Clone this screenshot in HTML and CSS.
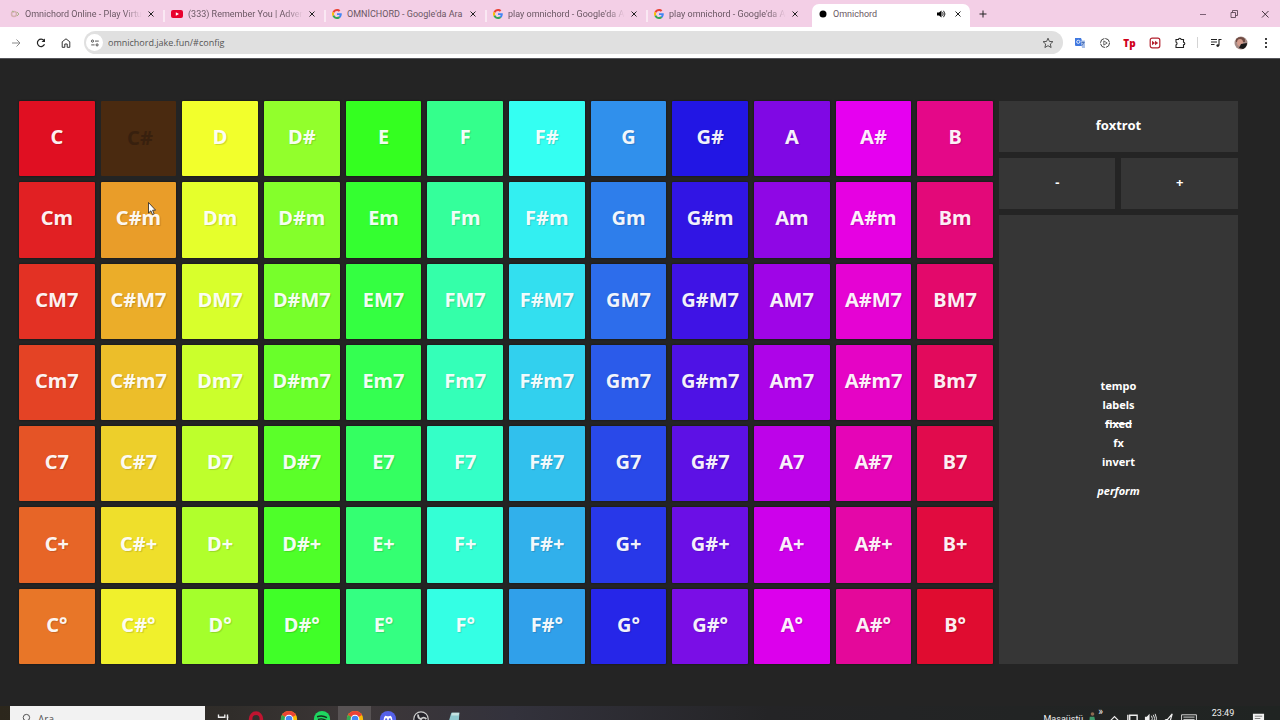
FILE: index.html
```html
<!DOCTYPE html>
<html lang="tr">
<head>
    <meta charset="UTF-8">
    <meta name="viewport" content="width=device-width, initial-scale=1.0">
    <title>Omnichord</title>
    <link rel="stylesheet" href="styles.css">
</head>
<body>
    <!-- shared icons -->
    <svg class="sprite" aria-hidden="true">
        <symbol id="google" viewBox="0 0 48 48">
            <path fill="#ea4335" d="M24 9.500c3.500 0 6.700 1.200 9.200 3.600l6.900-6.900C35.900 2.400 30.500 0 24 0 14.600 0 6.500 5.400 2.600 13.200l8 6.200C12.400 13.700 17.700 9.500 24 9.500z"/>
            <path fill="#4285f4" d="M47 24.500c0-1.600-.2-3.100-.4-4.500H24v9h12.900c-.6 3-2.200 5.500-4.700 7.200l7.700 6C44.400 38 47 32 47 24.500z"/>
            <path fill="#fbbc05" d="M10.500 28.600c-.5-1.500-.8-3-.8-4.600s.3-3.100.8-4.600l-8-6.200C1 16.500 0 20.100 0 24s1 7.500 2.600 10.800z"/>
            <path fill="#34a853" d="M24 48c6.500 0 11.900-2.100 15.900-5.800l-7.700-6c-2.200 1.500-4.900 2.300-8.200 2.300-6.300 0-11.600-4.200-13.500-9.900l-8 6.200C6.500 42.600 14.600 48 24 48z"/>
        </symbol>
        <symbol id="close" viewBox="0 0 8 8">
            <path d="M1.500 1.500l5 5M6.500 1.500l-5 5" stroke="currentColor" fill="none"/>
        </symbol>
        <symbol id="chrome" viewBox="0 0 20 20">
            <circle cx="10" cy="10" r="9" fill="#fbbc05"/>
            <path d="M10 10L2.200 5.500A9 9 0 0 1 17.800 5.500z" fill="#ea4335"/>
            <path d="M2.200 5.500A9 9 0 0 0 10 19l3-6-3-3z" fill="#34a853"/>
            <circle cx="10" cy="10" r="4.800" fill="#fff"/>
            <circle cx="10" cy="10" r="3.700" fill="#4285f4"/>
        </symbol>
    </svg>

    <header class="browser">
        <nav class="tabs">
            <div class="tab">
                <svg class="favicon" viewBox="0 0 10 10"><circle cx="4" cy="5" r="2.500" fill="none" stroke="#d3b0b0" stroke-width="1.500"/><path d="M2 2l2 1M7 3l2 2-2 2" stroke="#a9b48a" fill="none"/></svg>
                <a href="#" class="tab-title fade">Omnichord Online - Play Virtu</a>
                <button class="tab-close" aria-label="Kapat"><svg><use href="#close"/></svg></button>
            </div>
            <div class="tab">
                <svg class="favicon wide" viewBox="0 0 12 10"><rect x="0" y="1" width="12" height="8" rx="2" fill="#e8002d"/><path d="M4.800 3.200v3.600L8 5z" fill="#fff"/></svg>
                <a href="#" class="tab-title fade">(333) Remember You | Advent</a>
                <button class="tab-close" aria-label="Kapat"><svg><use href="#close"/></svg></button>
            </div>
            <div class="tab">
                <svg class="favicon"><use href="#google"/></svg>
                <a href="#" class="tab-title">OMNİCHORD - Google'da Ara</a>
                <button class="tab-close" aria-label="Kapat"><svg><use href="#close"/></svg></button>
            </div>
            <div class="tab">
                <svg class="favicon"><use href="#google"/></svg>
                <a href="#" class="tab-title fade">play omnichord - Google'da Ar</a>
                <button class="tab-close" aria-label="Kapat"><svg><use href="#close"/></svg></button>
            </div>
            <div class="tab">
                <svg class="favicon"><use href="#google"/></svg>
                <a href="#" class="tab-title fade">play omnichord - Google'da Ar</a>
                <button class="tab-close" aria-label="Kapat"><svg><use href="#close"/></svg></button>
            </div>
            <div class="tab active">
                <svg class="favicon" viewBox="0 0 10 10"><circle cx="5" cy="5" r="3.500"/></svg>
                <a href="#" class="tab-title">Omnichord</a>
                <svg class="sound" viewBox="0 0 10 10"><path d="M1 3.500h2l2.500-2v7L3 6.500H1z"/><path d="M6.500 3.300q1.400 1.700 0 3.400M7.500 1.800q3 3.200 0 6.400" fill="none" stroke="#222"/></svg>
                <button class="tab-close" aria-label="Kapat"><svg><use href="#close"/></svg></button>
            </div>
            <button class="tab-new" aria-label="Yeni sekme"><svg viewBox="0 0 10 10"><path d="M5 1.500v7M1.500 5h7" stroke="#222" fill="none"/></svg></button>
            <div class="window-buttons">
                <button aria-label="Simge durumuna küçült"><svg viewBox="0 0 10 10"><path d="M2 5.500h6" stroke="#7b6074" fill="none"/></svg></button>
                <button aria-label="Önceki boyut"><svg viewBox="0 0 10 10"><path d="M2 3.500h4.500v5H2zM3.500 3.500v-2h5v5h-2" stroke="#4c3a47" fill="none" stroke-width=".8"/></svg></button>
                <button aria-label="Kapat"><svg viewBox="0 0 10 10"><path d="M2 2l6.500 6.500M8.500 2L2 8.500" stroke="#33262f" fill="none" stroke-width=".9"/></svg></button>
            </div>
        </nav>

        <div class="toolbar">
            <button class="tool" aria-label="İleri"><svg viewBox="0 0 12 12"><path d="M2 6h8M6.500 2.500L10 6 6.500 9.500" stroke="#8a8a8a" fill="none"/></svg></button>
            <button class="tool" aria-label="Yenile"><svg viewBox="0 0 12 12"><path d="M9.500 7.300A3.700 3.700 0 1 1 9 3.500" stroke="#222" stroke-width="1.200" fill="none"/><path d="M10 1.500v3.500H6.500z" fill="#222"/></svg></button>
            <button class="tool" aria-label="Ana sayfa"><svg viewBox="0 0 12 12"><path d="M2.200 10.300V4.800L6 1.800l3.800 3v5.500H7.200V7H4.800v3.300z" stroke="#333" fill="none"/></svg></button>
            <label class="address">
                <span class="site-info"><svg viewBox="0 0 12 12"><path d="M6 3.700h4.500M1.500 8.300h4" stroke="#333" fill="none"/><circle cx="3" cy="3.700" r="1.300" stroke="#333" fill="none"/><circle cx="8.500" cy="8.300" r="1.300" stroke="#333" fill="none"/></svg></span>
                <input type="text" value="omnichord.jake.fun/#config" aria-label="Adres">
                <svg class="star" viewBox="0 0 12 12"><path d="M6 1.200l1.400 3.200 3.500.3-2.600 2.300.8 3.500L6 8.700l-3.100 1.800.8-3.500L1.100 4.700l3.500-.3z" stroke="#444" stroke-width=".9" fill="none"/></svg>
            </label>
            <button class="tool" aria-label="Çeviri"><svg viewBox="0 0 12 12"><path d="M1 1h6l3 8H2a1 1 0 0 1-1-1z" fill="#3f78e0"/><path d="M6.500 3.500H11V11H8z" fill="#a9bfe8"/><circle cx="4.300" cy="4.800" r="1.600" fill="none" stroke="#fff" stroke-width=".8"/><path d="M7.500 5.500h3M9 4.500v1M8 8.500l2-3" stroke="#345da8" stroke-width=".7"/></svg></button>
            <button class="tool" aria-label="Oynatıcı"><svg viewBox="0 0 12 12"><circle cx="6" cy="6" r="4.500" fill="none" stroke="#444" stroke-dasharray="6 1"/><path d="M4.800 3.900v4.200L8.200 6z" fill="none" stroke="#444" stroke-width=".8"/></svg></button>
            <button class="tool tp" aria-label="Eklenti Tp">Tp</button>
            <button class="tool" aria-label="Hızlandır"><svg viewBox="0 0 12 12"><rect x="1.200" y="1.200" width="9.600" height="9.600" rx="2" fill="#fff" stroke="#b3202e" stroke-width="1.200"/><path d="M3 3.800v4.400L6 6zM6 3.800v4.400L9.200 6z" fill="#b3202e"/></svg></button>
            <button class="tool" aria-label="Uzantılar"><svg viewBox="0 0 12 12"><path d="M2 2.500h2.500a1.300 1.300 0 0 1 2.600 0h2.400v2.700a1.300 1.300 0 0 1 0 2.600v2.700H2V8a1.600 1.600 0 0 0 0-3z" fill="none" stroke="#222" stroke-width="1.100"/></svg></button>
            <span class="divider"></span>
            <button class="tool" aria-label="Medya"><svg viewBox="0 0 12 12"><path d="M1 2.500h6M1 5h6M1 7.500h3.500M9 8.500V2.500h2.500" stroke="#222" stroke-width="1.100" fill="none"/><circle cx="7.800" cy="8.600" r="1.400" fill="#222"/></svg></button>
            <button class="tool" aria-label="Profil"><svg class="avatar" viewBox="0 0 14 14"><circle cx="7" cy="7" r="6.500" fill="#a58b86"/><path d="M2 3q5-4 9 0v3H2z" fill="#6f4b43"/><ellipse cx="6" cy="6.500" rx="3" ry="3.500" fill="#d49c8c"/><path d="M7 8l6-1q0 4-4 6L5 12z" fill="#181818"/></svg></button>
            <button class="tool" aria-label="Menü"><svg viewBox="0 0 12 12"><circle cx="6" cy="2" r="1"/><circle cx="6" cy="6" r="1"/><circle cx="6" cy="10" r="1"/></svg></button>
        </div>
    </header>

    <main class="omnichord" id="omnichord">
        <section class="config">
            <button class="rhythm">foxtrot</button>
            <button>-</button>
            <button>+</button>
            <div class="options">
                <button>tempo</button>
                <button>labels</button>
                <button class="off">fixed</button>
                <button>fx</button>
                <button>invert</button>
                <button class="perform">perform</button>
            </div>
        </section>
    </main>

    <footer class="taskbar">
        <div class="taskbar-inner">
            <label class="search">
                <svg viewBox="0 0 12 12"><circle cx="7" cy="5" r="3.500" fill="none" stroke="#444"/><path d="M4.500 7.500L1 11" stroke="#444"/></svg>
                <input type="text" placeholder="Ara" aria-label="Ara">
            </label>
            <button class="app" aria-label="Görev görünümü"><svg viewBox="0 0 20 20"><path d="M5 5v3h7V5M5 15v-3h7v3M15 5v10M14 8h2" stroke="#eee" stroke-width="1.500" fill="none"/></svg></button>
            <button class="app" aria-label="Opera"><svg viewBox="0 0 20 20"><ellipse cx="10" cy="10" rx="6" ry="6.500" fill="none" stroke="#c01430" stroke-width="4"/></svg></button>
            <button class="app" aria-label="Chrome"><svg><use href="#chrome"/></svg></button>
            <button class="app" aria-label="Spotify"><svg viewBox="0 0 20 20"><circle cx="10" cy="10" r="9" fill="#1ed760"/><path d="M4.500 7.500q6-2 11 1M5.500 10.500q5-1.500 9 1" stroke="#15301d" stroke-width="1.500" fill="none"/></svg></button>
            <button class="app open" aria-label="Chrome, açık"><svg><use href="#chrome"/></svg></button>
            <button class="app" aria-label="Discord"><svg viewBox="0 0 20 20"><circle cx="10" cy="10" r="9" fill="#5561e8"/><path d="M5 13q0-5 2-6.500l2 .5h2l2-.5q2 1.500 2 6.500l-3 1H8z" fill="#fff"/><circle cx="8" cy="10.500" r="1.200" fill="#5561e8"/><circle cx="12" cy="10.500" r="1.200" fill="#5561e8"/></svg></button>
            <button class="app" aria-label="OBS"><svg viewBox="0 0 20 20"><circle cx="10" cy="10" r="8" fill="#25232a" stroke="#ccc" stroke-width="1.300"/><path d="M10 10q-4-1-3-5M10 10q3-3 6 0M10 10q0 4-4 4" stroke="#ccc" stroke-width="2" fill="none"/></svg></button>
            <button class="app" aria-label="Not Defteri"><svg viewBox="0 0 20 20"><path d="M7 3h9l-1 14H3z" fill="#8fc9cf"/><path d="M8 3h8l-1 3H7z" fill="#c6e3e2"/></svg></button>
            <div class="tray">
                <span>Masaüstü</span>
                <svg class="figure" viewBox="0 0 10 16"><circle cx="5" cy="3" r="2" fill="#8d6b52"/><path d="M2 6h5l2 9H1z" fill="#3d9a6b"/></svg>
                <span class="more">»</span>
                <svg viewBox="0 0 14 14"><path d="M3 9l4-4 4 4" stroke="#eee" fill="none" stroke-width="1.300"/></svg>
                <svg viewBox="0 0 14 14"><path d="M2 3v8M4 3.500h8v7H4z" stroke="#eee" fill="none" stroke-width="1.500"/></svg>
                <svg viewBox="0 0 14 14"><path d="M1 5h2l3-3v10L3 9H1z" fill="#eee"/><path d="M8 4q2 3 0 6M10 3q3 4 0 8M12 2q3 5 0 10" stroke="#eee" fill="none"/></svg>
                <svg viewBox="0 0 14 14"><path d="M3 12q-1-4 3-4l5-6-2 7q-2 3-6 3" stroke="#eee" fill="none" stroke-width="1.300"/></svg>
                <svg class="keyboard" viewBox="0 0 18 14"><path d="M1 3h16v9H1zM3 5.500h12M3 8h12M5 10.500h8" stroke="#ddd" fill="none"/></svg>
                <time>23:49</time>
                <svg class="notice" viewBox="0 0 14 14"><path d="M1 2h12v8H8l-3 3v-3H1z" fill="#f2f2f2"/><path d="M3 4.500h8M3 7h6" stroke="#777"/></svg>
            </div>
        </div>
    </footer>

    <svg class="cursor" viewBox="0 0 8 13"><path d="M.5.500v10.500l2.400-2.200 1.600 3.700 1.600-.7-1.500-3.600h3z" fill="#fff" stroke="#222" stroke-width=".8"/></svg>

    <script src="script.js"></script>
</body>
</html>
```
FILE: styles.css
```css
:root {
    --tab-strip: #f3cfe6;
    --page: #242424;
    --panel: #363636;
    --gap: 6px;
}

* {
    box-sizing: border-box;
}

body {
    margin: 0;
    height: 100vh;
    display: flex;
    flex-direction: column;
    overflow: hidden;
    background: var(--page);
    font-family: "Segoe UI", "Open Sans", sans-serif;
}

button,
input {
    font: inherit;
    color: inherit;
    border: 0;
    padding: 0;
    margin: 0;
    background: none;
    outline: none;
}

button svg {
    display: block;
}

.sprite {
    position: absolute;
    width: 0;
    height: 0;
}

/* tabs */
.tabs {
    display: flex;
    align-items: flex-end;
    height: 27px;
    padding-left: 4px;
    background: var(--tab-strip);
    font-family: "Segoe UI", Roboto, sans-serif;
    font-size: 9px;
}

.tab {
    flex: 0 1 161px;
    min-width: 0;
    height: 23px;
    padding: 0 10px 3px 6px;
    display: flex;
    align-items: center;
    gap: 5px;
    color: #6a5763;
    background: linear-gradient(#fae8f3, #fae8f3) right 6px / 2px 12px no-repeat;
}

.tab:nth-child(5) {
    background: none;
}

.tab.active {
    background: #fff;
    border-radius: 7px 7px 0 0;
    margin-left: 3px;
    padding-right: 8px;
    flex-basis: 158px;
}

.favicon {
    flex: none;
    width: 10px;
    height: 10px;
}

.favicon.wide {
    width: 12px;
}

.tab-title {
    flex: 1;
    min-width: 0;
    white-space: nowrap;
    color: inherit;
    text-decoration: none;
}

.tab-title.fade {
    mask-image: linear-gradient(to right, #000 calc(100% - 18px), transparent);
}

.sound {
    flex: none;
    width: 10px;
    height: 10px;
    margin-right: 3px;
}

.tab-close {
    flex: none;
    color: #222;
}

.tab-close svg {
    width: 8px;
    height: 8px;
}

.tab-new {
    align-self: center;
    margin-left: 8px;
}

.tab-new svg {
    width: 10px;
    height: 10px;
}

.window-buttons {
    display: flex;
    align-self: center;
    margin-left: auto;
}

.window-buttons button {
    width: 31px;
    display: flex;
    justify-content: center;
}

.window-buttons svg {
    width: 10px;
    height: 10px;
}

/* toolbar */
.toolbar {
    display: flex;
    align-items: center;
    height: 32px;
    padding: 0 2px 0 3px;
    background: #fff;
    border-bottom: 1px solid #55555a;
}

.tool {
    flex: none;
    width: 25px;
    display: flex;
    justify-content: center;
}

.tool svg {
    width: 12px;
    height: 12px;
}

.tool .avatar {
    width: 14px;
    height: 14px;
}

.tool.tp {
    font-size: 10px;
    line-height: 12px;
    font-weight: 800;
    color: #d0021b;
}

.address {
    flex: 1;
    display: flex;
    align-items: center;
    gap: 5px;
    height: 23px;
    margin: 0 4px 0 6px;
    padding: 0 9px 0 2px;
    border-radius: 12px;
    background: #e0e0e0;
    font-size: 9px;
    color: #555;
}

.address input {
    flex: 1;
}

.site-info {
    display: flex;
    align-items: center;
    justify-content: center;
    width: 17px;
    height: 17px;
    border-radius: 50%;
    background: #fff;
}

.site-info svg {
    width: 10px;
    height: 10px;
}

.star {
    width: 12px;
    height: 12px;
}

.divider {
    width: 1px;
    height: 11px;
    margin: 0 5px;
    background: #d4d4d4;
}

/* instrument */
.omnichord {
    flex: 1;
    min-height: 0;
    display: grid;
    grid-template-columns: repeat(15, 1fr);
    grid-template-rows: repeat(7, 1fr);
    gap: var(--gap);
    padding: 42px 42px 42px 19px;
    font-family: "Trebuchet MS", "Noto Sans", sans-serif;
    font-weight: bold;
    color: #fff;
}

.chord {
    min-width: 0;
    padding-bottom: 4px;
    border-radius: 1px;
    font-size: 20px;
    color: rgba(255, 255, 255, 0.94);
    text-shadow: 1px 1px 1px rgba(0, 0, 0, 0.15);
    box-shadow: 0 0 2px rgba(0, 0, 0, 0.6);
}

.chord.playing {
    color: #38200e;
    padding: 0 0 2px 3px;
    text-shadow: none;
    box-shadow: none;
}

.config {
    grid-column: 13 / 16;
    grid-row: 1 / 8;
    display: grid;
    grid-template-columns: 1fr 1fr;
    grid-template-rows: 51px 51px 1fr;
    gap: var(--gap);
    font-size: 13px;
    text-shadow: 1px 1px 1px rgba(0, 0, 0, 0.6);
}

.config > * {
    background: var(--panel);
    padding-bottom: 3px;
}

.rhythm,
.options {
    grid-column: 1 / 3;
}

.options {
    display: flex;
    flex-direction: column;
    align-items: center;
    justify-content: center;
    font-size: 11px;
    line-height: 19px;
}

.off {
    text-decoration: line-through;
}

.perform {
    margin-top: 10px;
    font-style: italic;
}

/* taskbar, only its upper half is on screen */
.taskbar {
    flex: 0 0 14px;
    overflow: hidden;
    background: linear-gradient(to right, #2c271c, #302d2a 18%, #3d3738 28%, #33323c 40%, #242426 60%, #202422);
}

.taskbar-inner {
    display: flex;
    align-items: stretch;
    height: 25px;
    padding-left: 10px;
}

.search {
    display: flex;
    align-items: center;
    gap: 7px;
    width: 195px;
    margin-right: 1px;
    padding-left: 10px;
    background: #f2f2f2;
    color: #555;
    font-size: 10px;
}

.search svg {
    width: 11px;
    height: 11px;
}

.search input {
    flex: 1;
    min-width: 0;
}

.search input::placeholder {
    color: #555;
}

.app {
    width: 33px;
    display: flex;
    align-items: center;
    justify-content: center;
}

.app svg {
    width: 18px;
    height: 18px;
}

.app.open {
    background: #585354;
}

.tray {
    flex: 1;
    display: flex;
    align-items: center;
    justify-content: flex-end;
    gap: 5px;
    padding-right: 15px;
    color: #f0f0f0;
    font-family: "Segoe UI", Roboto, sans-serif;
    font-size: 9px;
}

.tray svg {
    width: 13px;
    height: 13px;
}

.tray .figure {
    width: 9px;
    height: 15px;
}

.tray .more {
    align-self: flex-start;
    margin-left: -4px;
    font-size: 10px;
    line-height: 12px;
}

.tray .keyboard {
    width: 18px;
}

.tray time {
    align-self: flex-start;
    width: 40px;
    line-height: 14px;
    text-align: center;
}

.tray .notice {
    margin-left: 4px;
}

.cursor {
    position: absolute;
    left: 148px;
    top: 202px;
    width: 8px;
    height: 13px;
}
```
FILE: script.js
```js
const suffixes = ['', 'm', 'M7', 'm7', '7', '+', '°'];

// first and last row colour of every column
const notes = [
    ['C', [224, 15, 34], [232, 118, 40]],
    ['C#', [232, 140, 40], [240, 240, 44]],
    ['D', [242, 255, 44], [164, 255, 44]],
    ['D#', [146, 255, 44], [64, 255, 40]],
    ['E', [52, 255, 32], [52, 255, 130]],
    ['F', [52, 255, 140], [52, 255, 228]],
    ['F#', [52, 255, 242], [48, 160, 234]],
    ['G', [48, 144, 236], [38, 38, 232]],
    ['G#', [34, 22, 228], [122, 14, 230]],
    ['A', [128, 8, 228], [220, 0, 236]],
    ['A#', [230, 0, 240], [228, 8, 154]],
    ['B', [228, 8, 136], [224, 12, 48]]
];

const board = document.getElementById('omnichord');
const config = board.querySelector('.config');

suffixes.forEach((suffix, row) => {
    notes.forEach(([note, from, to]) => {
        const button = document.createElement('button');
        const t = row / (suffixes.length - 1);
        const rgb = from.map((value, i) => Math.round(value + (to[i] - value) * t));

        button.className = 'chord';
        button.textContent = note + suffix;
        button.style.backgroundColor = `rgb(${rgb.join(', ')})`;

        if (note + suffix === 'C#') {
            button.classList.add('playing');
            button.style.backgroundColor = 'rgb(74, 42, 16)';
        }
        board.insertBefore(button, config);
    });
});
```
